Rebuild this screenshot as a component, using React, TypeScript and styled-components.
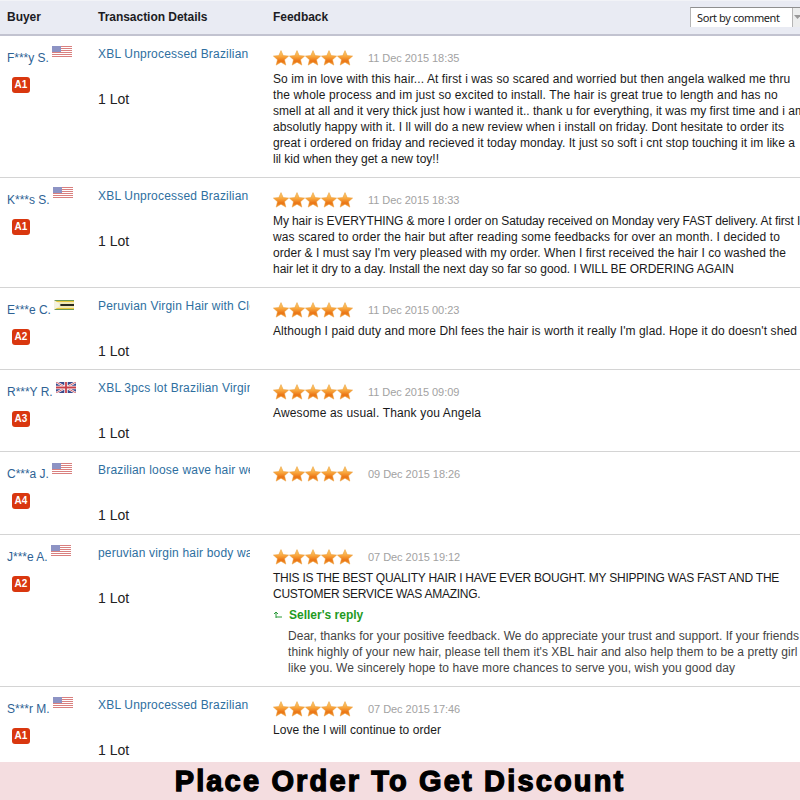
import React from "react";
import styled, { createGlobalStyle } from "styled-components";

const Global = createGlobalStyle`
  html, body { margin: 0; padding: 0; background: #fff; }
  body { width: 800px; height: 800px; overflow: hidden; font-family: "Liberation Sans", Arial, sans-serif; }
`;

const Page = styled.div`
  width: 800px;
  height: 800px;
  display: flex;
  flex-direction: column;
  overflow: hidden;
`;
const Head = styled.div`
  height: 31px;
  padding-bottom: 2px;
  flex: none;
  display: grid;
  grid-template-columns: 98px 175px 1fr;
  align-items: center;
  background: #e9ebf3;
  border-top: 1px solid #f2f3f7;
  border-bottom: 2px solid #c2c3d0;
  font-size: 12px;
  font-weight: bold;
  color: #1c1c24;
`;
const HeadCell = styled.div<{ $pad?: number }>`
  padding-left: ${(p) => p.$pad ?? 0}px;
  letter-spacing: -0.03px;
`;
const HeadLast = styled.div`
  display: flex;
  justify-content: space-between;
  align-items: center;
  overflow: hidden;
`;
const Sort = styled.div`
  width: 118px;
  height: 20px;
  flex: none;
  display: flex;
  box-sizing: border-box;
  margin: 0 -8px 0 0;
  background: #fff;
  border-top: 1px solid #8f8f8f;
  border-left: 1px solid #b5b5b5;
  font-family: "Noto Sans", sans-serif;
  font-weight: normal;
  font-size: 11px;
  letter-spacing: -0.4px;
  color: #222;
  align-items: center;
  padding-left: 6px;
  justify-content: space-between;
`;
const SortArrow = styled.div`
  width: 16px;
  height: 100%;
  background: #eceded;
  border-left: 1px solid #b5b5b5;
  display: flex;
  padding: 7px 0 0 1px;
  box-sizing: border-box;
`;
const Rows = styled.div`
  flex: 1;
  min-height: 0;
  overflow: hidden;
`;
const Row = styled.div<{ $h: number }>`
  height: ${(p) => p.$h}px;
  box-sizing: border-box;
  border-bottom: 1px solid #d4d4d4;
  display: grid;
  grid-template-columns: 98px 152px 1fr;
  padding-top: 1px;
  overflow: hidden;
`;
const BuyerCol = styled.div`
  padding: 7px 0 0 7px;
`;
const NameLine = styled.div`
  display: flex;
  align-items: flex-start;
  gap: 3px;
  height: 27px;
`;
const Name = styled.span`
  font-size: 12px;
  color: #2e6294;
  line-height: 14px;
  margin-top: 7px;
  letter-spacing: -0.02px;
`;
const FlagBox = styled.span<{ $top: number }>`
  display: flex;
  margin-top: ${(p) => p.$top}px;
`;
const Badge = styled.div`
  width: 18px;
  height: 16px;
  margin: 6px 0 0 5px;
  border-radius: 3px;
  background: #d9370f;
  color: #fff;
  font-size: 10px;
  font-weight: bold;
  line-height: 15px;
  text-align: center;
`;
const DetailCol = styled.div`
  padding-top: 10px;
  overflow: hidden;
`;
const Title = styled.div`
  font-size: 12px;
  line-height: 14px;
  color: #2e6f9f;
  white-space: nowrap;
  overflow: hidden;
  letter-spacing: 0.19px;
`;
const Lot = styled.div`
  margin-top: 30px;
  font-size: 14px;
  line-height: 16px;
  color: #222;
`;
const FeedCol = styled.div`
  padding: 13px 0 0 23px;
  overflow: hidden;
  min-width: 0;
`;
const Meta = styled.div`
  display: flex;
  align-items: center;
  height: 16px;
`;
const Stars = styled.div`
  display: flex;
  width: 95px;
`;
const When = styled.span`
  font-size: 11px;
  color: #a2a2a2;
  letter-spacing: -0.05px;
`;
const Body = styled.div`
  margin-top: 5px;
  color: #1a1a1a;
`;
const Line = styled.div`
  font-size: 12px;
  line-height: 16px;
  white-space: pre;
`;
const ReplyHead = styled.div`
  display: flex;
  align-items: center;
  gap: 7px;
  margin-top: 5px;
  height: 16px;
  font-size: 12px;
  font-weight: bold;
  color: #1f9a1f;
`;
const ReplyBody = styled.div`
  margin: 5px 0 0 15px;
  color: #444;
`;
const Banner = styled.div`
  height: 38px;
  flex: none;
  background: #f4dde0;
  display: flex;
  align-items: center;
  justify-content: center;
  font-weight: bold;
  font-size: 29px;
  letter-spacing: 2.15px;
  color: #000;
  -webkit-text-stroke: 1.3px #000;
`;

let ctx: CanvasRenderingContext2D | null = null;
/** Letter spacing that makes a 12px line span the width it has in the reference. */
function spacingFor(text: string, width: number) {
  if (!ctx) ctx = document.createElement("canvas").getContext("2d");
  if (!ctx) return 0;
  ctx.font = '12px "Liberation Sans"';
  return (width - ctx.measureText(text).width) / text.length;
}

const FitLine = ({ text, width }: { text: string; width: number }) => (
  <Line style={{ letterSpacing: `${spacingFor(text, width).toFixed(3)}px` }}>{text}</Line>
);

const Star = () => (
  <svg width="16" height="16" viewBox="0 0 16 16">
    <path
      d="M8 .6l2.2 5 5.4.5-4.1 3.6 1.3 5.4L8 12.2l-4.8 2.9 1.3-5.4L.4 6.1l5.4-.5z"
      fill="url(#starGrad)"
      stroke="#e8962e"
      strokeWidth=".5"
    />
  </svg>
);

const StarDefs = () => (
  <svg width="0" height="0" style={{ position: "absolute" }}>
    <defs>
      <linearGradient id="starGrad" x1="0" y1="0" x2="0" y2="1">
        <stop offset="0" stopColor="#fcd27a" />
        <stop offset=".42" stopColor="#f9a53c" />
        <stop offset=".72" stopColor="#ea7414" />
        <stop offset="1" stopColor="#f59a35" />
      </linearGradient>
    </defs>
  </svg>
);

const US = () => (
  <svg width="20" height="12" viewBox="0 0 20 12">
    <rect width="20" height="12" fill="#fff" />
    {[0, 2, 4, 6, 8, 10].map((y) => (
      <rect key={y} y={y} width="20" height="1" fill="#d9807f" />
    ))}
    <rect width="9" height="6" fill="#8d93c4" />
  </svg>
);
const ZW = () => (
  <svg width="20" height="10" viewBox="0 0 20 10">
    <rect width="20" height="10" fill="#f1e9b8" />
    <rect width="20" height="1" fill="#6d9a58" />
    <rect y="1" width="20" height="1" fill="#e9c93c" />
    <rect y="4" width="20" height="2" fill="#2a2a20" />
    <rect y="8" width="20" height="1" fill="#e9c93c" />
    <rect y="9" width="20" height="1" fill="#6d9a58" />
    <path d="M0 0l7 5-7 5z" fill="#f4f2e0" />
  </svg>
);
const UK = () => (
  <svg width="20" height="11" viewBox="0 0 20 11">
    <rect width="20" height="11" fill="#3a4a8c" />
    <path d="M0 0l20 11M20 0L0 11" stroke="#fff" strokeWidth="2.2" />
    <path d="M0 0l20 11M20 0L0 11" stroke="#c8404a" strokeWidth=".8" />
    <path d="M10 0v11M0 5.5h20" stroke="#fff" strokeWidth="3.4" />
    <path d="M10 0v11M0 5.5h20" stroke="#c8404a" strokeWidth="1.8" />
  </svg>
);

const flags = { US: <US />, ZW: <ZW />, UK: <UK /> };

type L = [string, number];
type R = {
  h: number;
  name: string;
  flag: keyof typeof flags;
  flagTop: number;
  badge: string;
  title: string;
  date: string;
  text: L[];
  reply?: L[];
};

const data: R[] = [
  {
    h: 142, name: "F***y S.", flag: "US", flagTop: 2, badge: "A1", title: "XBL Unprocessed Brazilian Virgin Hair", date: "11 Dec 2015 18:35",
    text: [
      ["So im in love with this hair... At first i was so scared and worried but then angela walked me thru", 518],
      ["the whole process and im just so excited to install. The hair is great true to length and has no", 505],
      ["smell at all and it very thick just how i wanted it.. thank u for everything, it was my first time and i am", 532],
      ["absolutly happy with it. I ll will do a new review when i install on friday. Dont hesitate to order its", 511],
      ["great i ordered on friday and recieved it today monday. It just so soft i cnt stop touching it im like a", 522],
      ["lil kid when they get a new toy!!", 166],
    ],
  },
  {
    h: 110, name: "K***s S.", flag: "US", flagTop: 1, badge: "A1", title: "XBL Unprocessed Brazilian Virgin Hair", date: "11 Dec 2015 18:33",
    text: [
      ["My hair is EVERYTHING & more I order on Satuday received on Monday very FAST delivery. At first I", 528],
      ["was scared to order the hair but after reading some feedbacks for over an month. I decided to", 507],
      ["order & I must say I'm very pleased with my order. When I first received the hair I co washed the", 513],
      ["hair let it dry to a day. Install the next day so far so good. I WILL BE ORDERING AGAIN", 462],
    ],
  },
  {
    h: 82, name: "E***e C.", flag: "ZW", flagTop: 4, badge: "A2", title: "Peruvian Virgin Hair with Closure", date: "11 Dec 2015 00:23",
    text: [["Although I paid duty and more Dhl fees the hair is worth it really I'm glad. Hope it do doesn't shed", 524]],
  },
  {
    h: 82, name: "R***Y R.", flag: "UK", flagTop: 4, badge: "A3", title: "XBL 3pcs lot Brazilian Virgin Hair", date: "11 Dec 2015 09:09",
    text: [["Awesome as usual. Thank you Angela", 209]],
  },
  {
    h: 83, name: "C***a J.", flag: "US", flagTop: 3, badge: "A4", title: "Brazilian loose wave hair weave", date: "09 Dec 2015 18:26",
    text: [],
  },
  {
    h: 152, name: "J***e A.", flag: "US", flagTop: 2, badge: "A2", title: "peruvian virgin hair body wave", date: "07 Dec 2015 19:12",
    text: [
      ["THIS IS THE BEST QUALITY HAIR I HAVE EVER BOUGHT. MY SHIPPING WAS FAST AND THE", 508],
      ["CUSTOMER SERVICE WAS AMAZING.", 208],
    ],
    reply: [
      ["Dear, thanks for your positive feedback. We do appreciate your trust and support. If your friends", 511],
      ["think highly of your new hair, please tell them it's XBL hair and also help them to be a pretty girl", 510],
      ["like you. We sincerely hope to have more chances to serve you, wish you good day", 447],
    ],
  },
  {
    h: 80, name: "S***r M.", flag: "US", flagTop: 2, badge: "A1", title: "XBL Unprocessed Brazilian Virgin Hair", date: "07 Dec 2015 17:46",
    text: [["Love the I will continue to order", 168]],
  },
];

export default function App() {
  return (
    <Page>
      <Global />
      <StarDefs />
      <Head>
        <HeadCell $pad={7}>Buyer</HeadCell>
        <HeadCell>Transaction Details</HeadCell>
        <HeadLast>
          <HeadCell>Feedback</HeadCell>
          <Sort>
            Sort by comment
            <SortArrow>
              <svg width="7" height="4" viewBox="0 0 7 4"><path d="M0 0h7L3.5 4z" fill="#999" /></svg>
            </SortArrow>
          </Sort>
        </HeadLast>
      </Head>
      <Rows>
        {data.map((r) => (
          <Row key={r.name} $h={r.h}>
            <BuyerCol>
              <NameLine>
                <Name>{r.name}</Name>
                <FlagBox $top={r.flagTop}>{flags[r.flag]}</FlagBox>
              </NameLine>
              <Badge>{r.badge}</Badge>
            </BuyerCol>
            <DetailCol>
              <Title>{r.title}</Title>
              <Lot>1 Lot</Lot>
            </DetailCol>
            <FeedCol>
              <Meta>
                <Stars>
                  {[0, 1, 2, 3, 4].map((i) => <Star key={i} />)}
                </Stars>
                <When>{r.date}</When>
              </Meta>
              {r.text.length > 0 && (
                <Body>
                  {r.text.map(([t, w]) => <FitLine key={t} text={t} width={w} />)}
                </Body>
              )}
              {r.reply && (
                <>
                  <ReplyHead>
                    <svg width="9" height="8" viewBox="0 0 9 8"><path d="M3 7V1M1 3l2-2 2 2M3 6h6" fill="none" stroke="#2a9a3a" strokeWidth="1" /></svg>
                    Seller's reply
                  </ReplyHead>
                  <ReplyBody>
                    {r.reply.map(([t, w]) => <FitLine key={t} text={t} width={w} />)}
                  </ReplyBody>
                </>
              )}
            </FeedCol>
          </Row>
        ))}
      </Rows>
      <Banner>Place Order To Get Discount</Banner>
    </Page>
  );
}
